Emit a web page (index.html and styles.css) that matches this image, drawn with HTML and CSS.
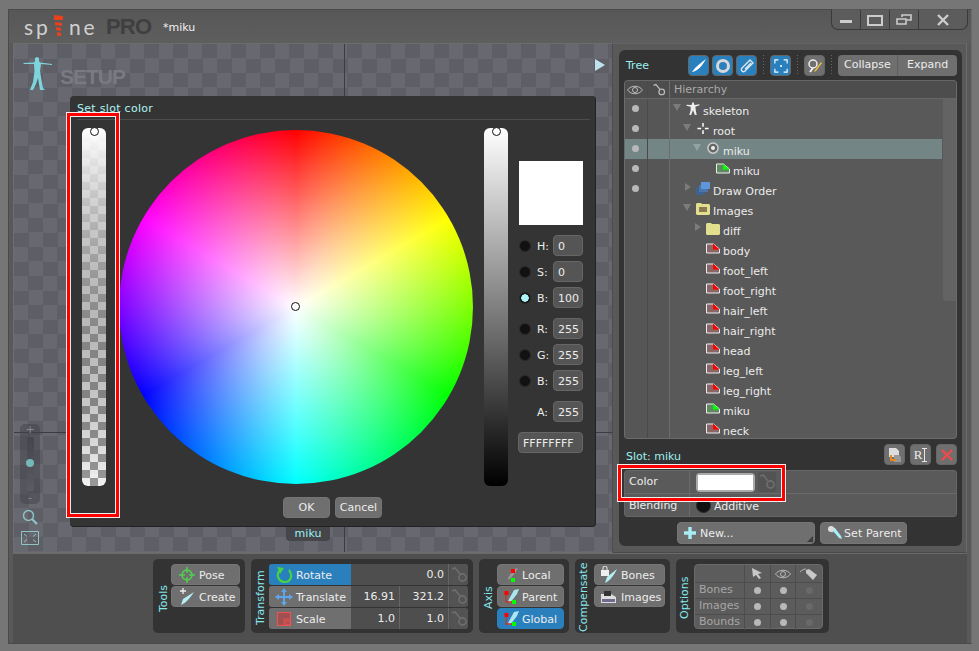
FILE: index.html
```html
<!DOCTYPE html>
<html lang="en">
<head>
<meta charset="utf-8">
<title>Spine</title>
<link rel="stylesheet" href="styles.css">
</head>
<body>
<svg class="defs" width="0" height="0" aria-hidden="true">
  <symbol id="key" viewBox="0 0 18 18"><path d="M2 3l3-1 5 6" fill="none" stroke="currentColor" stroke-width="1.6"/><circle cx="12.5" cy="11.5" r="3.6" fill="none" stroke="currentColor" stroke-width="1.6"/></symbol>
  <symbol id="img-red" viewBox="0 0 14 10"><path d="M.5.5h7l6 5v4H.5z" fill="#8a6666" stroke="#eee"/><path d="M7 0l6.5 6H7z" fill="#f00"/></symbol>
  <symbol id="img-green" viewBox="0 0 14 10"><path d="M.5.5h7l6 5v4H.5z" fill="#5f8a60" stroke="#eee"/><path d="M7 0l6.5 6H7z" fill="#0f0"/></symbol>
  <symbol id="folder" viewBox="0 0 14 13"><path d="M0 2l1-1h4l1 1h7l1 1v9l-1 1H1l-1-1z" fill="#e2df8e"/></symbol>
  <symbol id="axis" viewBox="0 0 18 18"><path d="M11 2l5-1-2 5-7 9-2-2z" fill="#a9e6ee"/><path d="M3 4v10h9" fill="none" stroke="#c0392b" stroke-width="1.4"/><rect x="1.5" y="3" width="4" height="4" fill="#f00"/><rect x="9" y="12" width="4" height="4" fill="#0f0"/></symbol>
</svg>
<div class="window">
  <header class="titlebar">
    <div class="logo">sp<svg class="logo-i" viewBox="0 0 10 21" width="10" height="21"><path d="M0 0l9 1v4L0 5zM1 7l7 1v3L1 10zM2 12l5 1v3l-5-1zM3 17l4 1v3H3z" fill="#e8411c"/></svg>ne</div>
    <div class="pro">PRO</div>
    <div class="docname">*miku</div>
    <div class="winctl">
      <div class="winbtn"><svg viewBox="0 0 16 12" width="16" height="12"><rect x="2" y="6" width="12" height="3" fill="#ccc"/></svg></div>
      <div class="winbtn"><svg viewBox="0 0 16 12" width="16" height="12"><path d="M1 2h14v9H1z" fill="none" stroke="#ccc" stroke-width="2"/></svg></div>
      <div class="winbtn"><svg viewBox="0 0 16 12" width="16" height="12"><path d="M6 3V1h9v5h-4M1 5h9v5H1z" fill="none" stroke="#ccc" stroke-width="1.6"/></svg></div>
      <div class="winbtn wide"><svg viewBox="0 0 12 12" width="12" height="12"><path d="M1 1l10 10M11 1L1 11" stroke="#ccc" stroke-width="2.4"/></svg></div>
    </div>
  </header>

  <div class="main">
    <section class="viewport">
      <div class="axis-v"></div>
      <div class="axis-h"></div>
      <svg class="figure" viewBox="0 0 30 34" width="30" height="34"><path d="M0 6l11-.5 1-1.500V1l2-1 2 1v3l1 1.500L29 7v1l-11-1-1 7 1 6 2 11 2 2h-5l-2-12-2 6-3 6H7l3-8 1.500-11L11 7 1 7z" fill="#7ed4dc"/></svg>
      <div class="setup">SETUP</div>
      <svg class="play" viewBox="0 0 10 12" width="10" height="12"><path d="M0 0l10 6-10 6z" fill="#bfe3ee"/></svg>

      <div class="zoomer">
        <span class="zplus">+</span>
        <div class="ztrack"><i class="zknob"></i></div>
        <span class="zminus">-</span>
      </div>
      <svg class="zglass" viewBox="0 0 16 16" width="16" height="16"><circle cx="6.5" cy="6.5" r="5" fill="none" stroke="#8ec6c8" stroke-width="1.4"/><path d="M10 10l5 5" stroke="#8ec6c8" stroke-width="2.2"/></svg>
      <svg class="zfit" viewBox="0 0 18 14" width="18" height="14"><path d="M.5.5h17v13H.5zM3 3l3 2.5M15 3l-3 2.5M3 11l3-2.5M15 11l-3-2.5" fill="none" stroke="#8ec6c8"/></svg>

      <div class="boneflag">miku</div>

      <div class="dialog">
        <div class="dialog-title">Set slot color</div>
        <div class="dialog-body">
          <div class="strip alpha"><i class="handle"></i></div>
          <div class="wheelcol">
            <div class="wheel"><i class="wheel-handle"></i></div>
            <div class="dialog-actions">
              <div class="btn act">OK</div>
              <div class="btn act">Cancel</div>
            </div>
          </div>
          <div class="strip bright"><i class="handle"></i></div>
          <div class="side">
            <div class="preview"></div>
            <div class="field first"><i class="radio"></i><label>H:</label><span class="input">0</span></div>
            <div class="field"><i class="radio"></i><label>S:</label><span class="input">0</span></div>
            <div class="field"><i class="radio on"></i><label>B:</label><span class="input">100</span></div>
            <div class="field gap"><i class="radio"></i><label>R:</label><span class="input">255</span></div>
            <div class="field"><i class="radio"></i><label>G:</label><span class="input">255</span></div>
            <div class="field"><i class="radio"></i><label>B:</label><span class="input">255</span></div>
            <div class="field gap2"><label>A:</label><span class="input">255</span></div>
            <div class="input hex">FFFFFFFF</div>
          </div>
        </div>
        <div class="redmark left"></div>
      </div>
    </section>

    <aside class="sidebar">
      <div class="panel">
        <div class="treebar">
          <span class="cyan treetitle">Tree</span>
          <div class="tbtn blue"><svg viewBox="0 0 16 16" width="16" height="16"><path d="M15 1C11 4 5 8 1 14c6-1 10-6 14-13z" fill="#fff"/></svg></div>
          <div class="tbtn blue"><svg viewBox="0 0 16 16" width="16" height="16"><circle cx="8" cy="8" r="5.5" fill="none" stroke="#d8d8d8" stroke-width="3"/></svg></div>
          <div class="tbtn blue"><svg viewBox="0 0 16 16" width="16" height="16"><path d="M3 10l8-8 3 3-8 8c-2 2-5-1-3-3zM6 11l6-6" fill="none" stroke="#dfe8ee" stroke-width="1.3"/></svg></div>
          <i class="dots"></i>
          <div class="tbtn blue"><svg viewBox="0 0 16 16" width="14" height="14"><path d="M1 5V1h4M11 1h4v4M15 11v4h-4M5 15H1v-4" fill="none" stroke="#fff" stroke-width="1.3"/><rect x="7" y="7" width="2" height="2" fill="#fff"/></svg></div>
          <i class="dots"></i>
          <div class="tbtn"><svg viewBox="0 0 16 16" width="16" height="16"><circle cx="6" cy="6" r="4" fill="none" stroke="#eee" stroke-width="1.5"/><path d="M3 14l3-4" stroke="#eee" stroke-width="2"/><path d="M15 5l-6 8-2 1 1-2 6-8z" fill="#f3c33c"/></svg></div>
          <i class="dots"></i>
          <div class="segbtn"><span>Collapse</span><span>Expand</span></div>
        </div>

        <div class="tree">
          <div class="tree-head">
            <div class="c1"><svg viewBox="0 0 16 10" width="16" height="10"><path d="M.5 5C4 0 12 0 15.5 5 12 10 4 10 .5 5z" fill="none" stroke="#bbb"/><circle cx="8" cy="5" r="2.5" fill="none" stroke="#bbb"/></svg></div>
            <div class="c2"><svg class="keyicon light"><use href="#key"/></svg></div>
            <div class="c3 dim">Hierarchy</div>
          </div>
          <div class="row"><div class="c1"><i class="dot"></i></div><div class="c2"></div><div class="c3 l0"><i class="tri down"></i><svg class="ti" viewBox="0 0 14 14"><path d="M0 3l5 .2L6 2.500V1l1-1 1 1v1.500l1 .7L14 2.500v1L9.500 5 10 9l1 5H9L7 9 5 14H3l1.500-5L4.500 5 0 4z" fill="#eee"/></svg>skeleton</div></div>
          <div class="row"><div class="c1"><i class="dot"></i></div><div class="c2"></div><div class="c3 l1"><i class="tri down"></i><svg class="ti" viewBox="0 0 14 14"><path d="M7 1v4M7 9v4M1 7h4M9 7h4" stroke="#fff" stroke-width="1.600"/></svg>root</div></div>
          <div class="row sel"><div class="c1"><i class="dot"></i></div><div class="c2"></div><div class="c3 l2"><i class="tri down"></i><svg class="ti" viewBox="0 0 14 14"><circle cx="7" cy="6.500" r="5.500" fill="#666" stroke="#ccc" stroke-width="1.600"/><circle cx="7" cy="6.500" r="2.200" fill="#eee"/></svg>miku</div></div>
          <div class="row"><div class="c1"><i class="dot"></i></div><div class="c2"></div><div class="c3 l3"><i class="tri none"></i><svg class="ti"><use href="#img-green"/></svg>miku</div></div>
          <div class="row"><div class="c1"><i class="dot"></i></div><div class="c2"></div><div class="c3 l1"><i class="tri right"></i><svg class="ti" viewBox="0 0 14 13"><rect x="0" y="5" width="9" height="8" fill="#3f628f"/><rect x="3" y="3" width="9" height="7" fill="#4b76ab"/><rect x="5" y="0" width="9" height="7" fill="#5f96da"/></svg>Draw Order</div></div>
          <div class="row"><div class="c1"></div><div class="c2"></div><div class="c3 l1"><i class="tri down"></i><svg class="ti" viewBox="0 0 14 13"><use href="#folder"/><path d="M3 5h8v5H3z" fill="#8a7a55"/></svg>Images</div></div>
          <div class="row"><div class="c1"></div><div class="c2"></div><div class="c3 l2"><i class="tri right"></i><svg class="ti" viewBox="0 0 14 13"><use href="#folder"/></svg>diff</div></div>
          <div class="row"><div class="c1"></div><div class="c2"></div><div class="c3 l2"><i class="tri none"></i><svg class="ti"><use href="#img-red"/></svg>body</div></div>
          <div class="row"><div class="c1"></div><div class="c2"></div><div class="c3 l2"><i class="tri none"></i><svg class="ti"><use href="#img-red"/></svg>foot_left</div></div>
          <div class="row"><div class="c1"></div><div class="c2"></div><div class="c3 l2"><i class="tri none"></i><svg class="ti"><use href="#img-red"/></svg>foot_right</div></div>
          <div class="row"><div class="c1"></div><div class="c2"></div><div class="c3 l2"><i class="tri none"></i><svg class="ti"><use href="#img-red"/></svg>hair_left</div></div>
          <div class="row"><div class="c1"></div><div class="c2"></div><div class="c3 l2"><i class="tri none"></i><svg class="ti"><use href="#img-red"/></svg>hair_right</div></div>
          <div class="row"><div class="c1"></div><div class="c2"></div><div class="c3 l2"><i class="tri none"></i><svg class="ti"><use href="#img-red"/></svg>head</div></div>
          <div class="row"><div class="c1"></div><div class="c2"></div><div class="c3 l2"><i class="tri none"></i><svg class="ti"><use href="#img-red"/></svg>leg_left</div></div>
          <div class="row"><div class="c1"></div><div class="c2"></div><div class="c3 l2"><i class="tri none"></i><svg class="ti"><use href="#img-red"/></svg>leg_right</div></div>
          <div class="row"><div class="c1"></div><div class="c2"></div><div class="c3 l2"><i class="tri none"></i><svg class="ti"><use href="#img-green"/></svg>miku</div></div>
          <div class="row"><div class="c1"></div><div class="c2"></div><div class="c3 l2"><i class="tri none"></i><svg class="ti"><use href="#img-red"/></svg>neck</div></div>
          <div class="scrollbar"></div>
        </div>

        <div class="slotbar">
          <span class="cyan">Slot: miku</span>
          <div class="tbtn"><svg viewBox="0 0 16 16" width="16" height="16"><path d="M2 1h7l3 3v6H2z" fill="#ddd"/><path d="M7 8h5l2 2v5H7z" fill="#999"/><path d="M4 8v5h5" fill="none" stroke="#e98a1f" stroke-width="2"/></svg></div>
          <div class="tbtn rtext">R<svg viewBox="0 0 5 14" width="5" height="14"><path d="M0 .5h5M2.500 0v14M0 13.500h5" stroke="#e6e6e6"/></svg></div>
          <div class="tbtn"><svg viewBox="0 0 12 12" width="12" height="12"><path d="M1 1l10 10M11 1L1 11" stroke="#ee4b4b" stroke-width="2.400"/></svg></div>
        </div>

        <div class="props">
          <div class="prop"><div class="pname">Color</div><div class="pval"><div class="swatch"><i></i></div><div class="keybox"><svg class="keyicon"><use href="#key"/></svg></div></div></div>
          <div class="prop"><div class="pname">Blending</div><div class="pval"><i class="radio big"></i><span>Additive</span></div></div>
        </div>

        <div class="newbar">
          <div class="btn newbtn"><svg viewBox="0 0 12 12" width="12" height="12"><path d="M6 0v12M0 6h12" stroke="#a9ecf5" stroke-width="3.400"/></svg><span>New...</span><i class="corner"></i></div>
          <div class="btn parentbtn"><svg viewBox="0 0 16 16" width="16" height="16"><path d="M3 1l5 2 6 8 1 3-3-1-6-7-1 2z" fill="#a9ecf5"/><circle cx="4" cy="4" r="3" fill="#ddd"/></svg><span>Set Parent</span></div>
        </div>
        <div class="redmark right"></div>
      </div>
    </aside>
  </div>

  <footer class="toolbar">
    <div class="group g-tools">
      <div class="vlabel">Tools</div>
      <div class="stack">
        <div class="btn tool"><svg viewBox="0 0 18 18" width="18" height="18"><circle cx="9" cy="9" r="5" fill="none" stroke="#4fd14f" stroke-width="1.500"/><path d="M9 1v6M9 11v6M1 9h6M11 9h6" stroke="#4fd14f" stroke-width="1.500"/></svg><span>Pose</span></div>
        <div class="btn tool"><svg viewBox="0 0 18 18" width="18" height="18"><path d="M5 0v6M2 3h6" stroke="#eee" stroke-width="1.300"/><path d="M16 4L5 11l-2 6c5-2 9-7 13-13z" fill="#b5eef5"/></svg><span>Create</span></div>
      </div>
    </div>

    <div class="group g-transform">
      <div class="vlabel">Transform</div>
      <div class="stack">
        <div class="trow"><div class="tlabel on"><svg viewBox="0 0 18 18" width="18" height="18"><path d="M4 5c-3 5 0 11 6 11s8-7 4-12" fill="none" stroke="#46d246" stroke-width="2.200"/><path d="M2 1l7 1-4 6z" fill="#46d246"/></svg><span>Rotate</span></div><div class="tval wide">0.0</div><div class="keybox"><svg class="keyicon"><use href="#key"/></svg></div></div>
        <div class="trow"><div class="tlabel"><svg viewBox="0 0 18 18" width="18" height="18"><path d="M9 0l3 4h-2v4h4V6l4 3-4 3v-2h-4v4h2l-3 4-3-4h2v-4H4v2L0 9l4-3v2h4V4H6z" fill="#5ea6e8"/></svg><span>Translate</span></div><div class="tval">16.91</div><div class="tval">321.2</div><div class="keybox"><svg class="keyicon"><use href="#key"/></svg></div></div>
        <div class="trow"><div class="tlabel"><svg class="scaleicon" viewBox="0 0 14 14" width="14" height="14"><rect x=".5" y=".5" width="13" height="13" fill="#a05050" stroke="#f05050"/><path d="M7 13V7h6" fill="none" stroke="#f05050"/><rect x="9" y="9" width="4" height="4" fill="none" stroke="#f05050"/></svg><span>Scale</span></div><div class="tval">1.0</div><div class="tval">1.0</div><div class="keybox"><svg class="keyicon"><use href="#key"/></svg></div></div>
      </div>
    </div>

    <div class="group g-axis">
      <div class="vlabel">Axis</div>
      <div class="stack">
        <div class="btn axisbtn"><svg viewBox="0 0 18 18" width="18" height="18"><path d="M11 3l4-1-3 5-6 7-1-2z" fill="#999"/><rect x="8" y="3" width="4" height="4" fill="#f00"/><rect x="8" y="12" width="4" height="4" fill="#0f0"/></svg><span>Local</span></div>
        <div class="btn axisbtn"><svg viewBox="0 0 18 18" width="18" height="18"><use href="#axis"/></svg><span>Parent</span></div>
        <div class="btn axisbtn on"><svg viewBox="0 0 18 18" width="18" height="18"><use href="#axis"/></svg><span>Global</span></div>
      </div>
    </div>

    <div class="group g-comp">
      <div class="vlabel">Compensate</div>
      <div class="stack">
        <div class="btn compbtn"><svg viewBox="0 0 18 18" width="18" height="18"><rect x="1" y="4" width="8" height="6" fill="#eee"/><path d="M3 4V2a2 2 0 0 1 4 0v2" fill="none" stroke="#eee"/><path d="M17 3L7 11l-2 6c5-2 9-8 12-14z" fill="#b5eef5"/></svg><span>Bones</span></div>
        <div class="btn compbtn"><svg viewBox="0 0 18 18" width="18" height="18"><path d="M1 6h10l5 3v6H1z" fill="#ddd"/><path d="M2 11h13v3H2z" fill="#6c6c90"/><rect x="4" y="3" width="7" height="5" fill="#333"/></svg><span>Images</span></div>
      </div>
    </div>

    <div class="group g-options">
      <div class="vlabel">Options</div>
      <div class="opts">
        <div class="orow head"><div class="oname"></div>
          <div class="ocell"><svg viewBox="0 0 10 11" width="10" height="11"><path d="M0 0l10 5-4 1 3 4-2 1-3-4-3 2z" fill="#c8c8c8"/></svg></div>
          <div class="ocell"><svg viewBox="0 0 16 10" width="16" height="10"><path d="M.5 5C4 0 12 0 15.500 5 12 10 4 10 .5 5z" fill="none" stroke="#b8b8b8"/><circle cx="8" cy="5" r="2.500" fill="none" stroke="#b8b8b8"/></svg></div>
          <div class="ocell"><svg viewBox="0 0 18 12" width="18" height="12"><path d="M0 4c2-2 4-3 6-3" fill="none" stroke="#b8b8b8"/><path d="M6 2l3-1 8 6-4 5-7-7z" fill="#c8c8c8"/></svg></div>
        </div>
        <div class="orow"><div class="oname">Bones</div><div class="ocell"><i class="dot"></i></div><div class="ocell"><i class="dot"></i></div><div class="ocell"><i class="dot off"></i></div></div>
        <div class="orow"><div class="oname">Images</div><div class="ocell"><i class="dot"></i></div><div class="ocell"><i class="dot"></i></div><div class="ocell"><i class="dot off"></i></div></div>
        <div class="orow"><div class="oname">Bounds</div><div class="ocell"><i class="dot"></i></div><div class="ocell"><i class="dot"></i></div><div class="ocell"><i class="dot off"></i></div></div>
      </div>
    </div>
  </footer>
</div>
</body>
</html>
```

FILE: styles.css
```css
* { box-sizing: border-box; }
html, body { margin: 0; height: 100%; }
body {
  background: #767676;
  overflow: hidden;
  font: 11px "DejaVu Sans", sans-serif;
  color: #ececec;
  padding: 9px 7px 7px 8px;
}
.defs { position: absolute; }
i { display: block; font-style: normal; }
.cyan { color: #9cf0f2; }

.window {
  height: 635px;
  background: #595959;
  border: 1px solid #4a4a4a;
  border-right: 1px solid #6a6a6a;
  display: flex;
  flex-direction: column;
  position: relative;
}
.titlebar {
  height: 33px;
  display: flex;
  align-items: center;
  padding-left: 15px;
  background: linear-gradient(#575757, #5e5e5e);
}
.logo {
  display: flex;
  align-items: center;
  font: 21px Lato, "Liberation Sans", sans-serif;
  letter-spacing: 3px;
  color: #d0d0d0;
  width: 82px;
  height: 24px;
}
.logo-i { margin: -2px 5px 0 3px; }
.pro {
  font: bold 22px "Liberation Sans", sans-serif;
  color: #3f3f3f;
  width: 57px;
  letter-spacing: -.8px;
  margin-top: 1px;
}
.docname { color: #f2f2f2; margin-top: 1px; }
.winctl {
  position: absolute;
  top: -1px;
  right: 3px;
  display: flex;
  height: 21px;
  border: 1px solid #3a3a3a;
  border-top-color: #555;
  border-radius: 0 0 7px 7px;
  background: #5c5c5c;
  overflow: hidden;
}
.winbtn {
  width: 29px;
  display: flex;
  align-items: center;
  justify-content: center;
  border-right: 1px solid #3a3a3a;
}
.winbtn.wide { width: 48px; border-right: 0; }

.main { flex: none; height: 510px; display: flex; padding-left: 4px; }
.viewport {
  position: relative;
  flex: none;
  width: 600px;
  border: 1px solid #6d6d6d;
  border-right-color: #4c4c4c;
  background: repeating-conic-gradient(#5e5e66 0 25%, #686870 0 50%) 0 0 / 29px 29px;
  overflow: hidden;
}
.axis-v { position: absolute; left: 330px; top: 0; bottom: 0; width: 1px; background: #3b3b46; }
.axis-h { position: absolute; left: 0; right: 0; top: 388px; height: 1px; background: #3b3b46; }
.figure { position: absolute; left: 9px; top: 13px; }
.setup {
  position: absolute;
  left: 46px;
  top: 21px;
  font: bold 21px "Liberation Sans", sans-serif;
  letter-spacing: -1px;
  color: #7a7a80;
}
.play { position: absolute; right: 7px; top: 15px; }
.zoomer {
  position: absolute;
  left: 6px;
  top: 380px;
  width: 20px;
  height: 80px;
  background: rgba(70, 70, 76, .55);
  border-radius: 5px;
  display: flex;
  flex-direction: column;
  align-items: center;
  color: #8b8b8b;
  font-size: 11px;
  line-height: 11px;
}
.zplus, .zminus { height: 12px; }
.ztrack {
  position: relative;
  width: 7px;
  flex: 1;
  margin: 1px 0;
  background: linear-gradient(#45454b, #5b5b62);
  border-radius: 2px;
}
.zknob {
  position: absolute;
  left: -.5px;
  top: 22px;
  width: 8px;
  height: 8px;
  border-radius: 50%;
  background: #74b8ba;
}
.zglass { position: absolute; left: 8px; top: 465px; }
.zfit { position: absolute; left: 7px; top: 487px; }
.boneflag {
  position: absolute;
  left: 272px;
  top: 480px;
  width: 44px;
  height: 17px;
  padding-top: 3px;
  text-align: center;
  color: #9cf0f2;
  background: #45454a;
  border-radius: 0 0 4px 4px;
}

.dialog {
  position: absolute;
  left: 56px;
  top: 52px;
  width: 526px;
  height: 431px;
  background: #343434;
  border-right: 1px solid #222;
  border-bottom: 1px solid #222;
  border-radius: 4px;
}
.dialog-title {
  margin: 0 5px 0 7px;
  height: 24px;
  padding-top: 6px;
  color: #aef5f5;
  letter-spacing: .3px;
  border-bottom: 1px solid #4c4c4c;
}
.dialog-body { display: flex; padding: 8px 0 0 12px; }
.strip { position: relative; width: 24px; height: 358px; border-radius: 6px; }
.alpha {
  background:
    linear-gradient(
      rgba(255, 255, 255, 1),
      rgba(230, 230, 230, .9),
      rgba(204, 204, 204, .8),
      rgba(179, 179, 179, .7),
      rgba(153, 153, 153, .6),
      rgba(128, 128, 128, .5),
      rgba(102, 102, 102, .4),
      rgba(77, 77, 77, .3),
      rgba(51, 51, 51, .2),
      rgba(26, 26, 26, .1),
      rgba(0, 0, 0, 0)
    ),
    repeating-conic-gradient(#999 0 25%, #f2f2f2 0 50%) 8px 100% / 16px 16px;
}
.bright { background: linear-gradient(#fff, #000); margin-left: 11px; }
.handle {
  position: absolute;
  left: 7.5px;
  top: -1px;
  width: 9px;
  height: 9px;
  border-radius: 50%;
  background: #fff;
  border: 1px solid #111;
}
.wheelcol { margin-left: 13px; padding-top: 2px; width: 354px; }
.wheel {
  position: relative;
  width: 354px;
  height: 354px;
  border-radius: 50%;
  background:
    radial-gradient(closest-side, #fff, rgba(255, 255, 255, 0)),
    conic-gradient(#f00, #ff0, #0f0, #0ff, #00f, #f0f, #f00);
}
.wheel-handle {
  position: absolute;
  left: 172px;
  top: 172px;
  width: 9px;
  height: 9px;
  border-radius: 50%;
  background: #fff;
  border: 1px solid #111;
}
.dialog-actions { display: flex; gap: 5px; margin-top: 13px; padding-left: 164px; }
.btn {
  display: flex;
  align-items: center;
  background: #6f6f6f;
  border: 1px solid #757575;
  border-radius: 4px;
  height: 21px;
}
.act { width: 47px; justify-content: center; }
.side { margin-left: 11px; width: 64px; padding-top: 33px; }
.preview { height: 64px; background: #fff; margin-bottom: 10px; }
.field {
  display: flex;
  align-items: center;
  height: 21px;
  margin-bottom: 5px;
}
.field.gap { margin-top: 10px; }
.field.gap2 { margin-top: 10px; margin-bottom: 10px; padding-left: 12px; }
.field label { width: 16px; margin-left: 6px; padding-top: 2px; }
.field .input { margin-left: auto; }
.radio {
  width: 12px;
  height: 12px;
  border-radius: 50%;
  background: #111;
  border: 1px solid #2a2a2a;
}
.radio.on { background: radial-gradient(circle, #aef5f5 0 3.500px, #111 4px); }
.radio.big { width: 15px; height: 15px; }
.input {
  display: block;
  width: 30px;
  height: 21px;
  padding: 4px 0 0 4px;
  background: #555;
  border: 1px solid #666;
  border-radius: 4px;
}
.hex { width: 65px; margin-left: -1px; }

.sidebar {
  flex: none;
  width: 354px;
  padding: 6px 10px 6px 6px;
  border-right: 1px solid #6a6a6a;
  border-top: 1px solid #636363;
  border-bottom: 1px solid #4a4a4a;
}
.panel {
  position: relative;
  height: 100%;
  width: 343px;
  padding: 0 5px;
  background: #333;
  border-radius: 6px;
  display: flex;
  flex-direction: column;
}
.treebar { height: 31px; display: flex; align-items: center; }
.treetitle { flex: none; width: 64px; padding-left: 2px; }
.tbtn {
  flex: none;
  width: 21px;
  height: 21px;
  margin-right: 3px;
  display: flex;
  align-items: center;
  justify-content: center;
  background: #6f6f6f;
  border: 1px solid #666;
  border-radius: 4px;
}
.tbtn.blue { background: #2a80bd; }
.dots {
  flex: none;
  width: 1px;
  height: 21px;
  margin: 0 6px 0 3px;
  background: repeating-linear-gradient(#666 0 1px, transparent 1px 3px);
}
.segbtn {
  flex: none;
  display: flex;
  height: 21px;
  width: 119px;
  background: #6f6f6f;
  border-radius: 4px;
}
.segbtn span { padding: 3px 0 0 9px; }
.segbtn span:first-child { width: 60px; padding-left: 6px; border-right: 1px solid #606060; }
.tree {
  position: relative;
  height: 359px;
  margin-top: -1px;
  background: #595959;
  border: 1px solid #6b6b6b;
  border-top: 1px solid #666;
  border-radius: 4px;
  overflow: hidden;
}
.tree-head {
  display: flex;
  height: 18px;
  background: #4d4d4d;
  border-bottom: 1px solid #666;
}
.tree-head .c1, .tree-head .c2, .tree-head .c3 { display: flex; align-items: center; }
.tree-head .c1, .tree-head .c2 { justify-content: center; }
.dim { color: #aaa; }
.c1 { width: 22px; flex: none; display: flex; align-items: center; justify-content: center; padding-right: 2px; }
.c2 { width: 22px; flex: none; border-left: 1px solid #4a4a4a; }
.c3 { flex: 1; border-left: 1px solid #6d6d6d; padding-left: 4px; }
.row { display: flex; height: 20px; position: relative; }
.row .c1, .row .c2 { background: #565656; }
.row.sel .c1, .row.sel .c2, .row.sel .c3 { background: #738584; }
.row.sel { margin-right: 14px; }
.row .c3 { display: flex; align-items: center; padding-top: 4px; white-space: nowrap; }
.l0 { padding-left: 3px !important; }
.l1 { padding-left: 13px !important; }
.l2 { padding-left: 23px !important; }
.l3 { padding-left: 33px !important; }
.tri { width: 13px; height: 9px; flex: none; margin-top: -8px; }
.tri.down { width: 0; height: 0; margin-right: 5px; border: 4px solid transparent; border-top: 7px solid #7c7c7c; border-bottom: 0; }
.sel .tri.down { border-top-color: #92a3a2; }
.tri.right { width: 0; height: 0; margin: -8px 5px 0 2px; border: 4px solid transparent; border-left: 6px solid #7c7c7c; border-right: 0; }
.ti { width: 14px; height: 13px; flex: none; margin: -6px 3px 0 0; }
.dot { width: 7px; height: 7px; border-radius: 50%; background: #b8b8b8; margin-top: -1px; }
.dot.off { background: #696969; }
.scrollbar {
  position: absolute;
  right: 0;
  top: 18px;
  width: 13px;
  height: 202px;
  background: #636363;
  border-radius: 0 0 0 3px;
}
.keyicon { width: 18px; height: 18px; color: #6e6e6e; }
.keyicon.light { width: 14px; height: 14px; color: #bbb; }
.slotbar {
  display: flex;
  align-items: center;
  justify-content: flex-end;
  height: 31px;
  position: relative;
}
.slotbar .cyan { margin-right: auto; padding: 3px 0 0 2px; }
.slotbar .tbtn { margin: 0 0 0 5px; }
.rtext { font: 13px "Liberation Serif", serif; }
.props {
  background: #5a5a5a;
  border: 1px solid #666;
  border-radius: 3px;
  height: 47px;
}
.prop { display: flex; height: 23px; border-bottom: 1px solid #6a6a6a; }
.prop:last-child { border-bottom: 0; }
.pname { width: 65px; padding: 4px 0 0 4px; border-right: 1px solid #6a6a6a; }
.prop:last-child .pname { padding-top: 5px; }
.prop:last-child .pval span { padding-top: 2px; }
.pval { flex: 1; display: flex; align-items: center; padding-left: 6px; gap: 3px; }
.swatch { width: 59px; height: 19px; background: #aaa; border-radius: 4px; padding: 2px 0 2px 2px; }
.swatch i { width: 55px; height: 15px; background: #fff; }
.keybox {
  flex: none;
  width: 18px;
  height: 20px;
  background: #535353;
  border-radius: 3px;
  display: flex;
  align-items: center;
  justify-content: center;
}
.newbar { display: flex; gap: 5px; margin-top: 5px; padding-left: 53px; }
.newbtn { width: 138px; padding-left: 6px; gap: 4px; position: relative; height: 22px; }
.corner {
  position: absolute;
  right: 1px;
  bottom: 1px;
  border: 3.500px solid #3c3c3c;
  border-top-color: transparent;
  border-left-color: transparent;
}
.parentbtn { width: 87px; padding-left: 6px; gap: 1px; height: 22px; letter-spacing: .1px; }
.redmark {
  position: absolute;
  border: 3px solid #f00;
  outline: 1px solid #eee;
  box-shadow: inset 0 0 0 1px #eee;
  pointer-events: none;
}
.redmark.left { left: -3px; top: 17px; width: 52px; height: 404px; }
.redmark.right { left: -1px; top: 415px; width: 167px; height: 36px; }

.toolbar {
  flex: 1;
  display: flex;
  justify-content: center;
  gap: 6px;
  padding: 5px 0 0 2px;
  background: #4f4f4f;
  margin: 0 4px;
  border-top: 1px solid #6a6a6a;
  align-items: flex-start;
}
.group {
  display: flex;
  height: 74px;
  background: #333;
  border-radius: 5px;
  padding: 5px 5px 0 0;
}
.vlabel {
  writing-mode: vertical-rl;
  transform: rotate(180deg);
  color: #86e8ee;
  width: 18px;
  height: 68px;
  text-align: center;
  line-height: 18px;
}
.g-tools .vlabel { margin: 0 -2px 0 2px; }
.g-transform .vlabel, .g-axis .vlabel { margin: 0 -1px 0 1px; }
.stack { display: flex; flex-direction: column; gap: 1px; }
.stack .btn span, .tlabel span { margin-top: 2px; }
.tool { width: 69px; padding-left: 6px; gap: 3px; }
.g-tools { width: 92px; }
.g-transform { width: 222px; }
.g-axis { width: 90px; }
.g-comp { width: 95px; }
.g-options { width: 153px; }
.trow { display: flex; height: 21px; width: 199px; background: #4e4e4e; border-radius: 3px; }
.tlabel {
  width: 82px;
  padding-left: 6px;
  gap: 3px;
  display: flex;
  align-items: center;
  background: #6f6f6f;
  border-radius: 3px 0 0 3px;
  flex: none;
}
.scaleicon { margin: 0 2px; }
.tlabel.on { background: #2a80bd; }
.tval { width: 49px; text-align: right; padding: 4px 4px 0 0; border-right: 1px solid #666; flex: none; }
.tval.wide { width: 98px; }
.trow .keybox { width: 18px; height: 21px; margin-left: auto; }
.axisbtn { width: 67px; padding-left: 5px; gap: 1px; }
.axisbtn.on { background: #2a80bd; border-color: #2a80bd; }
.compbtn { width: 71px; padding-left: 5px; gap: 3px; }
.g-comp .vlabel { width: 19px; }
.opts {
  width: 129px;
  height: 65px;
  background: #5c5c5c;
  border: 1px solid #6a6a6a;
  border-radius: 4px;
}
.orow { display: flex; height: 16px; border-top: 1px solid #4d4d4d; }
.orow.head { height: 17px; border-top: 0; }
.oname { width: 50px; padding: 0 0 0 4px; color: #a6a6a6; border-right: 1px solid #4d4d4d; flex: none; }
.ocell {
  width: 26px;
  display: flex;
  align-items: center;
  justify-content: center;
  border-right: 1px solid #4d4d4d;
}
.ocell:last-child { border-right: 0; }
```
